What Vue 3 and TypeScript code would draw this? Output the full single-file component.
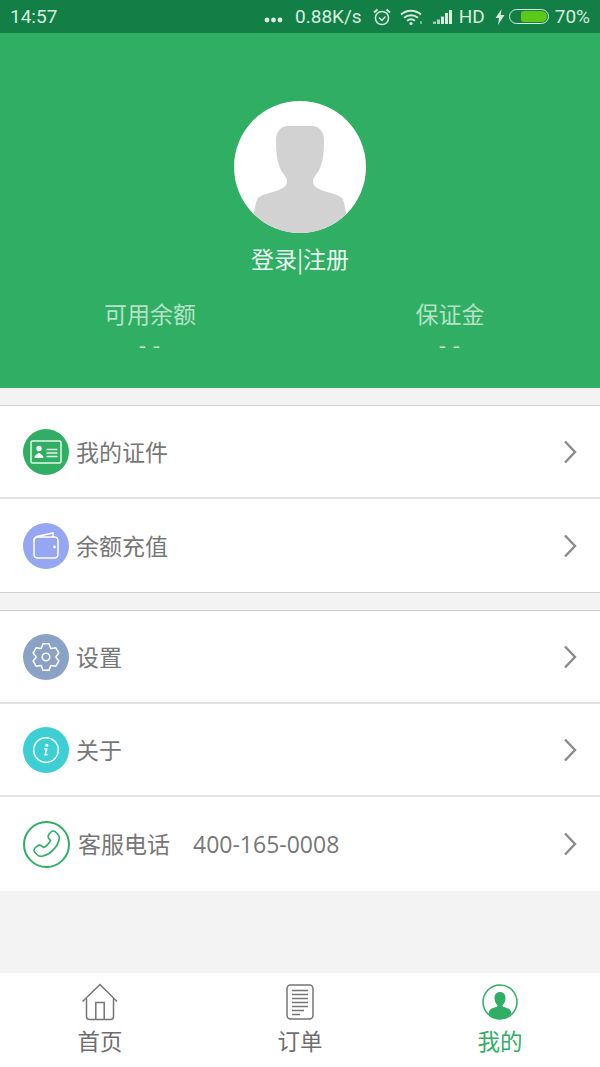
<template>
  <div class="page">
    <div class="status-bar">
      <span class="clock">14:57</span>
      <div class="status-right">
        <svg class="st-dots" width="19" height="6" viewBox="0 0 19 6" fill="#d8ebdf">
          <circle cx="3" cy="3" r="2.4" />
          <circle cx="9.5" cy="3" r="2.4" />
          <circle cx="16" cy="3" r="2.4" />
        </svg>
        <span>0.88K/s</span>
        <svg class="st-alarm" width="20" height="20" viewBox="0 0 20 20" fill="none" stroke="#d8ebdf" stroke-width="1.5">
          <circle cx="10" cy="11" r="6.6" />
          <path d="M7 10.5 10 13.5l3.4-4" />
          <path d="M2 5.5 5.5 2.5M18 5.5 14.5 2.5" stroke-width="2" />
        </svg>
        <svg class="st-wifi" width="24" height="18" viewBox="0 0 24 18" fill="none" stroke="#d8ebdf" stroke-width="1.8">
          <path d="M1 6.5C6.5 1.5 15.5 1.5 21 6.5" />
          <path d="M4 9.8C8 6.4 14 6.4 18 9.8" />
          <path d="M7 12.8C9.4 10.9 12.6 10.9 15 12.8" />
          <circle cx="11" cy="15.5" r="1.6" fill="#d8ebdf" stroke="none" />
          <path d="M21 13v3" stroke-width="1" />
        </svg>
        <svg class="st-signal" width="20" height="16" viewBox="0 0 20 16" fill="#d8ebdf">
          <rect x="0" y="12.5" width="3" height="2.5" opacity="0.7" />
          <rect x="4" y="10.5" width="3" height="4.5" opacity="0.8" />
          <rect x="8" y="7.5" width="3" height="7.5" />
          <rect x="12" y="4" width="3" height="11" />
          <rect x="16" y="1" width="3" height="14" />
        </svg>
        <span>HD</span>
        <svg class="st-bolt" width="10" height="16" viewBox="0 0 10 16" fill="#d8ebdf">
          <path d="M6.5 0 0.5 9h3.5L3 16l6.5-10H5.8z" />
        </svg>
        <div class="battery"><div class="battery-fill"></div></div>
        <span>70%</span>
      </div>
    </div>

    <header class="hero">
      <div class="avatar">
        <svg width="132" height="132" viewBox="0 0 132 132">
          <path
            fill="#d2d2d2"
            d="M55 25H77C86 25 90 31 90 40C90 55 88 64 84 71C81 75 79 77 79 80C79 85 83 87 87 89C95 92 104 93 108 97C110 100 111 106 112 112L112 132H20L20 112C21 106 22 100 24 97C28 93 37 92 45 89C49 87 53 85 53 80C53 77 51 75 48 71C44 64 42 55 42 40C42 31 46 25 55 25Z"
          />
        </svg>
      </div>
      <div class="login">登录|注册</div>
      <div class="balances">
        <div class="balance" v-for="b in balances" :key="b">
          <div class="balance-label">{{ b }}</div>
          <div class="balance-value">- -</div>
        </div>
      </div>
    </header>

    <section class="group first">
      <div class="row">
        <span class="ic" style="background: #2fae64">
          <svg width="32" height="24" viewBox="0 0 32 24" fill="none" stroke="#e6f6ec" stroke-width="1.5">
            <rect x="1" y="1" width="30" height="22" rx="1.5" />
            <circle cx="9" cy="8.5" r="2.7" fill="#fff" stroke="none" />
            <path d="M4.5 18c0-3 2.800-3.500 3.400-4.700h2.200c.6 1.200 3.400 1.700 3.400 4.700z" fill="#fff" stroke="none" />
            <path d="M16.5 9.5h11M16.5 13h11M16.5 16.5h11" />
          </svg>
        </span>
        <span class="label">我的证件</span>
        <svg class="chev" width="14" height="24" viewBox="0 0 14 24" fill="none" stroke="#8a8a8a" stroke-width="2.4"><path d="M2 1.500 12 12 2 22.500" /></svg>
      </div>
      <div class="row">
        <span class="ic" style="background: #97a6f3">
          <svg width="28" height="27" viewBox="0 0 28 27" fill="none" stroke="#fff" stroke-width="1.5">
            <path d="M2 9C2 6 3.500 5 5 4.500L21 1v4" />
            <rect x="2" y="5" width="24" height="21" rx="3.5" />
            <circle cx="22.5" cy="15" r="1.4" fill="#fff" stroke="none" />
          </svg>
        </span>
        <span class="label">余额充值</span>
        <svg class="chev" width="14" height="24" viewBox="0 0 14 24" fill="none" stroke="#8a8a8a" stroke-width="2.4"><path d="M2 1.500 12 12 2 22.500" /></svg>
      </div>
    </section>

    <section class="group second">
      <div class="row">
        <span class="ic" style="background: #8aa2c6">
          <svg width="30" height="30" viewBox="0 0 30 30" fill="none" stroke="#fff" stroke-width="1.5" stroke-linejoin="round">
            <path :d="gearPath" />
            <circle cx="15" cy="15" r="3.8" />
          </svg>
        </span>
        <span class="label">设置</span>
        <svg class="chev" width="14" height="24" viewBox="0 0 14 24" fill="none" stroke="#8a8a8a" stroke-width="2.4"><path d="M2 1.500 12 12 2 22.500" /></svg>
      </div>
      <div class="row">
        <span class="ic" style="background: #3dcfd3">
          <svg width="28" height="28" viewBox="0 0 28 28" fill="none">
            <circle cx="14" cy="14" r="12.3" stroke="#fff" stroke-width="1.5" />
            <circle cx="14.8" cy="9.2" r="1.5" fill="#fff" />
            <path d="M12.300 12.300h3.400l-1.500 6h1.400v1.200h-3.400l1.500-6h-1.400z" fill="#fff" />
          </svg>
        </span>
        <span class="label">关于</span>
        <svg class="chev" width="14" height="24" viewBox="0 0 14 24" fill="none" stroke="#8a8a8a" stroke-width="2.4"><path d="M2 1.500 12 12 2 22.500" /></svg>
      </div>
      <div class="row phone">
        <span class="ic ic-phone">
          <svg width="30" height="30" viewBox="0 0 30 30" fill="none" stroke="#2fae64" stroke-width="1.6">
            <path d="M19 3C20.500 1.800 22.500 2 23.500 3L26 5.500C27.500 7 27.500 9 27 11C25.500 18 18 25.500 11 27C9 27.500 7 27.500 5.500 26L3 23.500C2 22.500 1.800 20.500 3 19L5.500 16.800C7 15.800 8.500 16 9.800 17L11.500 18.500C14 17.500 17.500 14 18.500 11.500L17 9.800C16 8.500 15.800 7 16.800 5.500Z" />
          </svg>
        </span>
        <span class="label">客服电话</span>
        <span class="tel">400-165-0008</span>
        <svg class="chev" width="14" height="24" viewBox="0 0 14 24" fill="none" stroke="#8a8a8a" stroke-width="2.4"><path d="M2 1.500 12 12 2 22.500" /></svg>
      </div>
    </section>

    <div class="spacer"></div>

    <nav class="tabbar">
      <div class="tab">
        <svg width="38" height="38" viewBox="0 0 38 38" fill="none" stroke="#757575" stroke-width="1.5">
          <path d="M1.500 18.500 19 1.500l17 17" />
          <path d="M5.500 15.500v18c0 2 1 3 3 3h21c2 0 3-1 3-3v-18" />
          <path d="M14.800 36.500V19.500h8.400v17" />
        </svg>
        <span>首页</span>
      </div>
      <div class="tab">
        <svg width="28" height="36" viewBox="0 0 28 36" fill="none" stroke="#757575" stroke-width="1.5">
          <rect x="1" y="1" width="26" height="34" rx="3.5" />
          <path d="M6 6.500h16M6 10.500h16M6 14.500h16M6 18.500h16M6 22.500h16M6 26.500h12M6 30.500h8" stroke-width="1.3" />
        </svg>
        <span>订单</span>
      </div>
      <div class="tab active">
        <svg width="36" height="36" viewBox="0 0 36 36" fill="none">
          <circle cx="18" cy="18" r="17" stroke="#2fae64" stroke-width="1.5" />
          <path
            fill="#2fae64"
            d="M18 8c3.400 0 5.500 2.500 5.500 6 0 3-1.200 5.500-2.800 7-.4 1 .1 1.700 1.200 2.100 2.700 1 5.600 1.500 6.600 3.400l1 2.700C26.700 33 22.500 35 18 35S9.300 33 6.500 29.200l1-2.700c1-1.900 3.900-2.400 6.600-3.400 1.100-.4 1.600-1.100 1.200-2.100-1.600-1.500-2.800-4-2.800-7 0-3.500 2.100-6 5.500-6z"
          />
        </svg>
        <span>我的</span>
      </div>
    </nav>
  </div>
</template>

<script setup lang="ts">
const balances: string[] = ["可用余额", "保证金"];

// six lobes round the centre of a 30x30 box
const gearPath = (() => {
  const pts: string[] = [];
  const at = (deg: number, r: number) => {
    const a = (deg * Math.PI) / 180;
    return `${(15 + r * Math.cos(a)).toFixed(2)} ${(15 + r * Math.sin(a)).toFixed(2)}`;
  };
  for (let i = 0; i < 6; i++) {
    const c = i * 60 - 90;
    pts.push(at(c - 27, 10), at(c - 13, 13.5), at(c + 13, 13.5), at(c + 27, 10));
  }
  return `M${pts.join("L")}Z`;
})();
</script>

<style>
html,
body {
  margin: 0;
  background: #f3f3f3;
}
</style>

<style scoped>
.page {
  width: 600px;
  height: 1067px;
  display: flex;
  flex-direction: column;
  background: #f3f3f3;
  overflow: hidden;
  font-family: "Noto Sans CJK SC", "Liberation Sans", sans-serif;
}

.status-bar {
  height: 33px;
  flex: none;
  background: #127f46;
  color: #d8ebdf;
  display: flex;
  align-items: center;
  justify-content: space-between;
  padding: 0 10px;
  font-family: Roboto, "Liberation Sans", sans-serif;
  font-size: 19px;
}

.status-right {
  display: flex;
  align-items: center;
}

.st-dots {
  margin-right: 12px;
  margin-top: 6px;
}

.st-alarm {
  margin-left: 10px;
}

.st-wifi {
  margin-left: 8px;
}

.st-signal {
  margin-left: 9px;
  margin-right: 6px;
}

.st-bolt {
  margin-left: 10px;
}

.battery {
  width: 40px;
  height: 15px;
  margin-left: 4px;
  margin-right: 6px;
  box-sizing: border-box;
  border: 1px solid #d8ebdf;
  border-radius: 8px;
  padding: 1px 1px 1px 11px;
}

.battery-fill {
  height: 100%;
  background: #5cc81a;
  border-radius: 3px 6px 6px 3px;
}

.hero {
  height: 355px;
  flex: none;
  box-sizing: border-box;
  background: #2fae64;
  padding-top: 68px;
  display: flex;
  flex-direction: column;
  align-items: center;
  color: #e9f6ee;
}

.avatar {
  width: 132px;
  height: 132px;
  border-radius: 50%;
  background: #fff;
  overflow: hidden;
}

.avatar svg {
  display: block;
}

.login {
  margin-top: 9px;
  font-size: 23px;
  line-height: 32px;
}

.balances {
  align-self: stretch;
  display: flex;
  margin-top: 23px;
}

.balance {
  width: 300px;
  text-align: center;
  color: #b5e2c6;
  font-size: 23px;
  line-height: 32px;
}

.balance-value {
  color: #d9f0e2;
  font-size: 21px;
  line-height: 28px;
  letter-spacing: 1px;
  margin-top: 1px;
}

.group {
  flex: none;
  background: #fff;
  border-top: 1px solid #d0d0d0;
}

.first {
  margin-top: 17px;
  border-bottom: 1px solid #d0d0d0;
}

.second {
  margin-top: 17px;
}

.row {
  height: 93px;
  display: flex;
  align-items: center;
  padding: 0 23px;
  box-sizing: border-box;
  border-bottom: 2px solid #e2e2e2;
}

.row:last-child {
  border-bottom: none;
}

.phone {
  height: 94px;
}

.ic {
  width: 46px;
  height: 46px;
  border-radius: 50%;
  display: flex;
  align-items: center;
  justify-content: center;
  flex: none;
}

.ic-phone {
  box-sizing: border-box;
  border: 2px solid #2fae64;
  width: 47px;
  height: 47px;
}

.label {
  margin-left: 7px;
  margin-bottom: 2px;
  font-size: 23px;
  color: #777;
}

.phone .label {
  margin-left: 8px;
}

.tel {
  margin-left: 23px;
  margin-bottom: 1px;
  font-family: "Open Sans", "Liberation Sans", sans-serif;
  font-size: 23px;
  color: #777;
}

.chev {
  margin-left: auto;
}

.spacer {
  flex: 1;
}

.tabbar {
  height: 94px;
  flex: none;
  background: #fff;
  display: grid;
  grid-template-columns: repeat(3, 200px);
}

.tab {
  height: 100%;
  display: flex;
  flex-direction: column;
  align-items: center;
  box-sizing: border-box;
  padding-top: 10px;
  color: #6e6e6e;
  font-size: 22.5px;
  line-height: 30px;
}

.tab svg {
  height: 38px;
  display: block;
  margin-bottom: 4px;
}

.active {
  color: #2fae64;
}
</style>
